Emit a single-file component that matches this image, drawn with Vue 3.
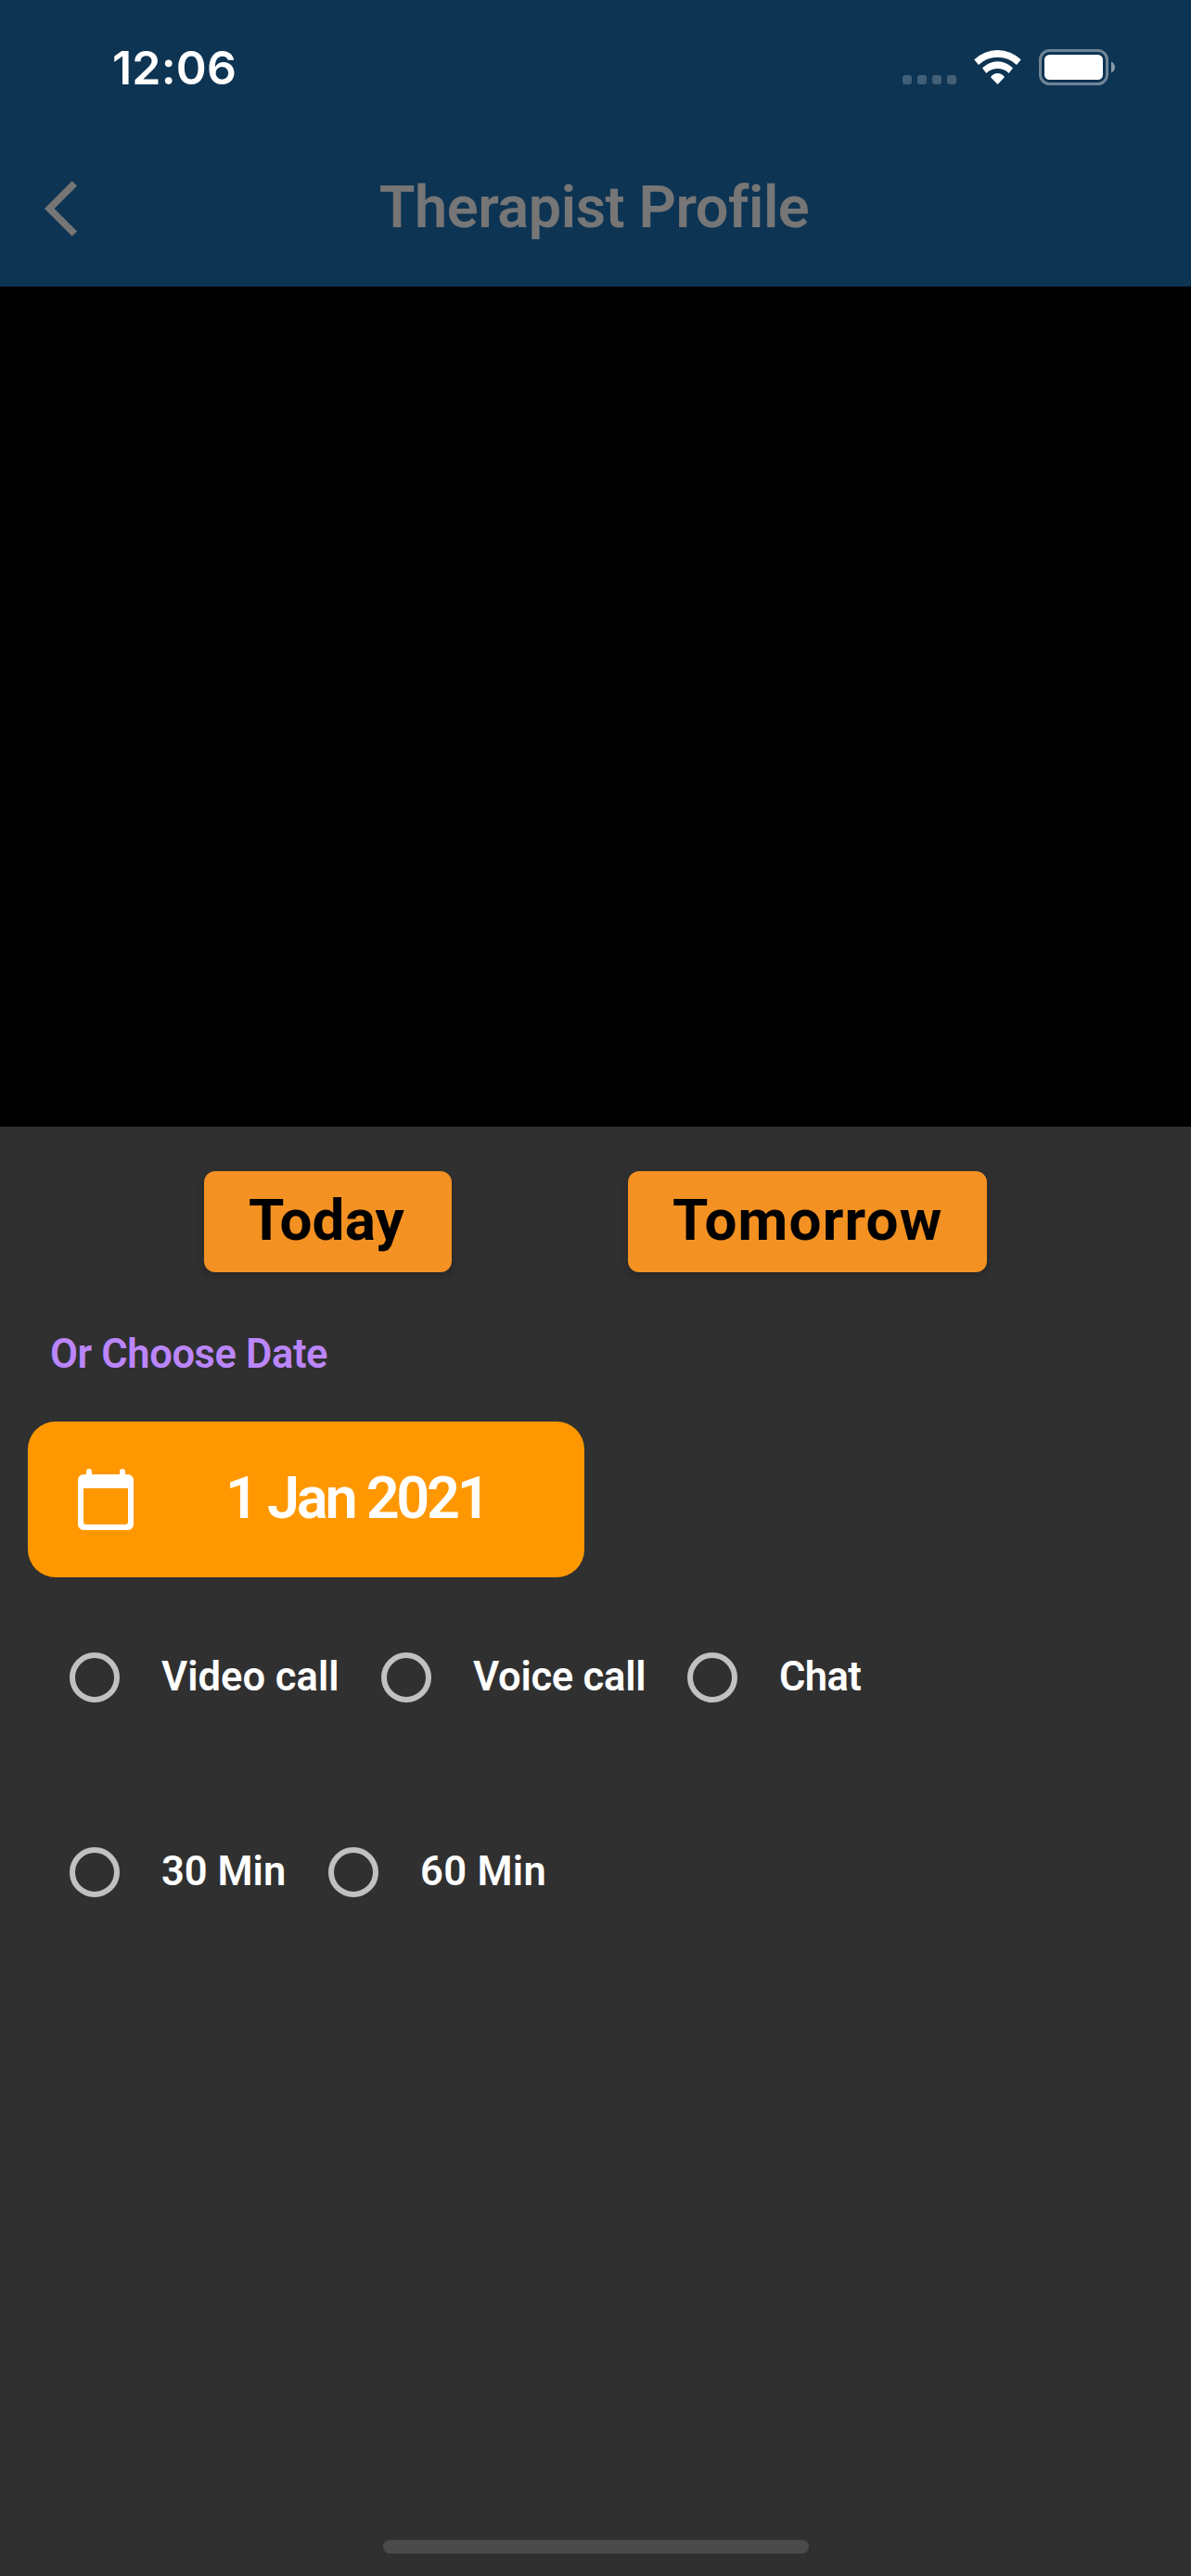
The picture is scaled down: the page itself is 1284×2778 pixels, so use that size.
<script setup>
import { ref } from 'vue'

const callTypes = [
  { id: 'video', label: 'Video call' },
  { id: 'voice', label: 'Voice call' },
  { id: 'chat', label: 'Chat' },
]
const durations = [
  { id: 'min30', label: '30 Min' },
  { id: 'min60', label: '60 Min' },
]
const callType = ref('')
const duration = ref('')
</script>

<template>
  <div class="screen">
    <header class="header">
      <div class="status-bar">
        <span class="time">12:06</span>
        <svg class="status-icons" width="230" height="40" viewBox="0 0 230 40" fill="#fff">
          <g fill-opacity="0.21">
            <rect x="0" y="28" width="10" height="10" rx="3" />
            <rect x="16" y="28" width="10" height="10" rx="3" />
            <rect x="32" y="28" width="10" height="10" rx="3" />
            <rect x="48" y="28" width="10" height="10" rx="3" />
          </g>
          <path d="M77.3 11.3A36 36 0 0 1 127.7 11.3L123 17A29.5 29.5 0 0 0 82 17Z" />
          <path d="M86 20.3A23 23 0 0 1 119 20.3L114.7 26A17.4 17.4 0 0 0 90.3 26Z" />
          <path d="M95 30.3A8.7 8.7 0 0 1 110 30.3L102.5 38Z" />
          <rect x="148.5" y="1.5" width="72" height="36" rx="10" fill="none" stroke="#fff" stroke-opacity="0.4" stroke-width="3" />
          <rect x="153" y="6" width="63" height="27" rx="5.5" />
          <path fill-opacity="0.5" d="M225 13.5C227.500 14.500 229 17 229 19.500C229 22 227.500 24.500 225 25.500Z" />
        </svg>
      </div>
      <nav class="app-bar">
        <svg class="back" width="72" height="72" viewBox="0 0 24 24" fill="#767676">
          <path d="M11.670 3.870L9.900 2.100 0 12l9.900 9.900 1.770-1.770L3.540 12z" />
        </svg>
        <h1 class="title">Therapist Profile</h1>
      </nav>
    </header>

    <main class="sheet">
      <div class="quick-days">
        <button class="day today">Today</button>
        <button class="day tomorrow">Tomorrow</button>
      </div>
      <p class="choose">Or Choose Date</p>
      <button class="date">
        <svg width="60" height="66" viewBox="0 0 60 66" fill="#fff">
          <path fill-rule="evenodd" d="M9 6V3a3 3 0 0 1 6 0v3h30V3a3 3 0 0 1 6 0v3h3a6 6 0 0 1 6 6v48a6 6 0 0 1-6 6H6a6 6 0 0 1-6-6V12a6 6 0 0 1 6-6ZM6 21v36a3 3 0 0 0 3 3h42a3 3 0 0 0 3-3V21Z" />
        </svg>
        <span class="date-text">1 Jan 2021</span>
      </button>
      <div class="options">
        <label v-for="o in callTypes" :key="o.id" class="option" :class="o.id">
          <input v-model="callType" type="radio" name="call" :value="o.id" />
          <span>{{ o.label }}</span>
        </label>
      </div>
      <div class="options durations">
        <label v-for="o in durations" :key="o.id" class="option" :class="o.id">
          <input v-model="duration" type="radio" name="duration" :value="o.id" />
          <span>{{ o.label }}</span>
        </label>
      </div>
      <div class="home-indicator"></div>
    </main>
  </div>
</template>

<style>
body {
  margin: 0;
  background: #000;
}
</style>

<style scoped>
.screen {
  display: flex;
  flex-direction: column;
  justify-content: space-between;
  width: 1284px;
  height: 2778px;
  overflow: hidden;
  background: #000;
  font-family: Roboto, sans-serif;
  font-weight: 600;
}
.header {
  height: 309px;
  background: #0e3453;
}
.status-bar {
  display: flex;
  justify-content: space-between;
  align-items: center;
  box-sizing: border-box;
  height: 141px;
  padding: 5px 81px 0 121px;
}
.time {
  font-family: Inter, sans-serif;
  font-size: 50px;
  line-height: 60px;
  letter-spacing: 0.2px;
  color: #fff;
}
.status-icons {
  display: block;
}
.app-bar {
  display: grid;
  grid-template-columns: 72px 1fr 72px;
  align-items: center;
  height: 168px;
  padding: 0 48px;
}
.title {
  margin: 0;
  padding: 0 3px 3px 0;
  font-size: 63px;
  font-weight: 600;
  line-height: 74px;
  letter-spacing: -0.45px;
  text-align: center;
  white-space: nowrap;
  color: #767676;
}
.sheet {
  display: flex;
  flex-direction: column;
  align-items: flex-start;
  box-sizing: border-box;
  height: 1563px;
  padding: 48px 0 24px;
  background: #303030;
}
button {
  border: 0;
  font-family: inherit;
}
.quick-days {
  display: flex;
  gap: 190px;
  padding-left: 220px;
}
.day {
  box-sizing: border-box;
  height: 109px;
  padding: 0 0 4px 48px;
  border-radius: 12px;
  background: #f39122;
  box-shadow: 0 4px 8px rgba(0, 0, 0, 0.22);
  color: #000;
  font-size: 62px;
  font-weight: 700;
  text-align: left;
}
.today {
  width: 267px;
  letter-spacing: 0.2px;
}
.tomorrow {
  width: 387px;
  letter-spacing: 1.2px;
}
.choose {
  margin: 59px 0 0 54px;
  font-size: 43.5px;
  line-height: 60px;
  letter-spacing: -0.4px;
  color: #bb86fc;
}
.date {
  display: flex;
  align-items: center;
  gap: 99px;
  width: 600px;
  height: 168px;
  margin: 42px 0 0 30px;
  padding: 0 0 0 54px;
  border-radius: 30px;
  background: #ff9800;
  color: #fff;
}
.date-text {
  padding-bottom: 3px;
  font-size: 63px;
  font-weight: 600;
  letter-spacing: -3.3px;
  word-spacing: 0;
}
.options {
  display: flex;
  margin: 78px 0 0 75px;
}
.durations {
  margin-top: 150px;
}
.option {
  display: flex;
  align-items: center;
  gap: 45px;
  height: 60px;
  font-size: 43.5px;
  line-height: 60px;
  white-space: nowrap;
  color: #fff;
}
.option input {
  appearance: none;
  flex: none;
  box-sizing: border-box;
  width: 54px;
  height: 54px;
  margin: 0;
  border: 6px solid #c1c1c1;
  border-radius: 50%;
}
.video {
  width: 336px;
}
.voice {
  width: 330px;
  letter-spacing: -0.25px;
}
.chat {
  letter-spacing: -0.6px;
}
.min30 {
  width: 279px;
}
.min60 {
  letter-spacing: 0.3px;
}
.home-indicator {
  align-self: center;
  width: 459px;
  height: 15px;
  margin-top: auto;
  border-radius: 8px;
  background: #4a4a4a;
}
</style>
